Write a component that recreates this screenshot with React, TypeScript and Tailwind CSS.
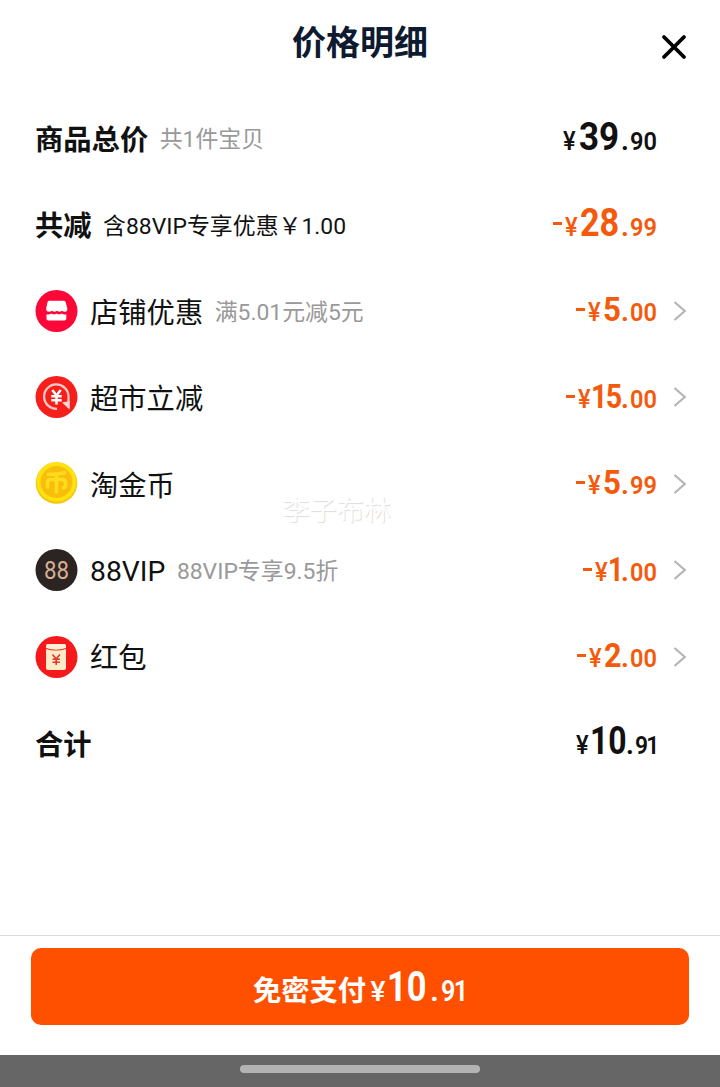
import type { ReactNode } from "react";
import clsx from "clsx";

type PriceProps = {
  minus?: boolean;
  whole: string;
  cents: string;
  // box and glyph squeeze of each part
  wholeBox: string;
  wholeText: string;
  centsBox?: string;
  centsText?: string;
};

function Price({ minus, whole, cents, wholeBox, wholeText, centsBox, centsText }: PriceProps) {
  return (
    <div
      className={clsx(
        "flex items-baseline whitespace-nowrap leading-none font-semibold pb-[3px]",
        minus ? "text-[#f45a0c]" : "text-[#111]"
      )}
    >
      {minus && <span className="w-[9px] h-[3px] mr-[3px] mb-[1px] bg-[#f45a0c] self-center relative top-[1px]" />}
      <span className="w-[15px] text-[25px] font-medium">
        <span className="inline-block origin-left scale-x-[0.95]">¥</span>
      </span>
      <span className={clsx("font-bold", wholeBox)}>
        <span className={clsx("inline-block origin-left", wholeText)}>{whole}</span>
      </span>
      <span className="w-[9px] text-[27px] font-bold">.</span>
      <span className={clsx("text-[26.5px]", centsBox || "w-[27px]")}>
        <span className={clsx("inline-block origin-left", centsText || "scale-x-[0.89]")}>
          {cents}
        </span>
      </span>
    </div>
  );
}

type RowProps = {
  icon?: ReactNode;
  label: string;
  latin?: boolean;
  note?: string;
  noteClass?: string;
  bold?: boolean;
  arrow?: boolean;
  children: ReactNode;
};

function Row({ icon, label, latin, note, noteClass, bold, arrow, children }: RowProps) {
  return (
    <div className="flex items-center h-[86.4px] pl-[35px] pr-[33px]">
      {icon && <span className="w-[43px] mr-[12px]">{icon}</span>}
      <span
        className={clsx(
          "text-[28.3px] leading-none text-[#111]",
          latin ? "pt-[3px]" : "pt-[6px]",
          bold && "font-bold"
        )}
      >
        {label}
      </span>
      {note && (
        <span className={clsx("ml-[11.5px] pt-[5px] text-[22.9px] leading-none", noteClass || "text-[#999]")}>
          {note}
        </span>
      )}
      <div className="ml-auto">{children}</div>
      <span className="w-[30px] flex justify-end">
        {arrow && (
          <svg width="14" height="22" viewBox="0 0 14 22" fill="none" stroke="#b5b5b5" strokeWidth="2.2">
            <path d="M1.5 2 11.8 11 1.5 20" />
          </svg>
        )}
      </span>
    </div>
  );
}

function ShopIcon() {
  return (
    <svg width="43" height="42" viewBox="0 0 43 42">
      <circle cx="21.5" cy="21" r="21" fill="#fb0738" />
      <path
        d="M14.3 10.8h14.4q1.6 0 2 1.4l1.6 6.2q.4 3-2.2 3.400-1.800.1-3.100-1-2.500 2-5 0-2.700 2-5 0-1.500 1.100-3.300 1-2.900-.6-2.500-3.400l1.300-6.200q.4-1.400 1.800-1.400z"
        fill="#fff"
      />
      <path
        d="M11.5 24.200q2.700.8 4.900-.8 2.700 1.700 5.100 0 2.700 1.700 5.100 0 2 1.500 4.700.8v4.500q0 1.800-1.800 1.800H13.300q-1.800 0-1.800-1.800z"
        fill="#fff"
      />
    </svg>
  );
}

function MarketIcon() {
  return (
    <svg width="43" height="42" viewBox="0 0 43 42">
      <circle cx="21.5" cy="21" r="21" fill="#f5201c" />
      <path
        d="M22 32.800A12.200 12.200 0 1 1 33.500 20.500V32"
        fill="none"
        stroke="#ffc9c5"
        strokeWidth="2.200"
      />
      <path d="M27 26.500 34.600 25v8.500z" fill="#ffd5d2" />
      <path
        d="m17.300 14 4.200 5.500 4.200-5.500M21.500 19.500v9M16.300 20.300h10.400M16.300 24.200h10.400"
        fill="none"
        stroke="#fff"
        strokeWidth="2.500"
      />
    </svg>
  );
}

function CoinIcon() {
  return (
    <svg width="43" height="42" viewBox="0 0 43 42" className="relative -top-px">
      <circle cx="21.5" cy="21" r="20.8" fill="#f3c80c" />
      <circle cx="21.5" cy="19.8" r="19.8" fill="#ffe211" />
      <circle cx="21.5" cy="20" r="16" fill="#f9bd0c" />
      <path
        d="M12 12.500Q22 12.500 31 10.500M21.500 13v18.500M12.500 26.500V21q0-3.500 3.500-3.500h11q3.500 0 3.500 3.500v2.500q0 2.500-3.500 2.500"
        fill="none"
        stroke="#ffdc1d"
        strokeWidth="3.600"
      />
    </svg>
  );
}

function VipIcon() {
  return (
    <svg width="43" height="42" viewBox="0 0 43 42">
      <circle cx="21.5" cy="21" r="21" fill="#2b2422" />
      <text
        transform="translate(21.5 30) scale(0.84 1)"
        textAnchor="middle"
        fontSize="26.5"
        fontWeight="400"
        fill="#d8ae92"
      >
        88
      </text>
    </svg>
  );
}

function RedPacketIcon() {
  return (
    <svg width="43" height="42" viewBox="0 0 43 42">
      <circle cx="21.5" cy="21" r="21" fill="#f5191b" />
      <path d="M11 9.500q0-1.500 1.500-1.500h17q1.500 0 1.500 1.500V12q-10 3.500-20 0z" fill="#fff0d5" />
      <path d="M11 13q10 3 20 0V32q0 2-2 2H13q-2 0-2-2z" fill="#fdebc8" />
      <path
        d="m17.500 18.500 3.700 4.500 3.700-4.500M21.200 23v6M17.500 23.200h7.400M17.500 26.200h7.400"
        fill="none"
        stroke="#e3352a"
        strokeWidth="1.600"
      />
    </svg>
  );
}

export default function App() {
  return (
    <div className="relative flex flex-col w-[720px] h-[1087px] bg-white overflow-hidden font-['Roboto','Noto_Sans_CJK_SC',sans-serif]">
      <header className="relative h-[95px] pt-[26px] text-center">
        <h1 className="text-[34px] leading-[34px] font-bold text-[#0e1a30]">价格明细</h1>
        <button className="absolute right-[33px] top-[34px]">
          <svg width="26" height="26" viewBox="0 0 26 26" stroke="#000" strokeWidth="3.8" strokeLinecap="round">
            <path d="M3 3 23 23M23 3 3 23" />
          </svg>
        </button>
      </header>

      <main className="flex-1">
        <Row label="商品总价" note="共1件宝贝" bold>
          <Price whole="39" cents="90" wholeBox="w-[43px] pl-[1px] text-[38px]" wholeText="scale-x-[0.92]" />
        </Row>
        <Row label="共减" note="含88VIP专享优惠￥1.00" noteClass="text-[#111]" bold>
          <Price minus whole="28" cents="99" wholeBox="w-[41px] text-[38px]" wholeText="scale-x-[0.9]" />
        </Row>
        <Row icon={<ShopIcon />} label="店铺优惠" note="满5.01元减5元" arrow>
          <Price minus whole="5" cents="00" wholeBox="w-[18px] text-[34px]" wholeText="scale-x-[0.92]" />
        </Row>
        <Row icon={<MarketIcon />} label="超市立减" arrow>
          <Price
            minus
            whole="15"
            cents="00"
            wholeBox="w-[30px] -ml-[2px] text-[34px]"
            wholeText="tracking-[-2px] scale-x-[0.84]"
          />
        </Row>
        <Row icon={<CoinIcon />} label="淘金币" arrow>
          <Price minus whole="5" cents="99" wholeBox="w-[18px] text-[34px]" wholeText="scale-x-[0.92]" />
        </Row>
        <Row icon={<VipIcon />} label="88VIP" latin note="88VIP专享9.5折" arrow>
          <Price
            minus
            whole="1"
            cents="00"
            wholeBox="w-[13px] -ml-[2px] text-[34px]"
            wholeText="tracking-[-4px] scale-x-[0.8]"
          />
        </Row>
        <Row icon={<RedPacketIcon />} label="红包" arrow>
          <Price minus whole="2" cents="00" wholeBox="w-[17px] text-[34px]" wholeText="scale-x-[0.9]" />
        </Row>
        <Row label="合计" bold>
          <Price
            whole="10"
            cents="91"
            wholeBox="w-[36px] -ml-[1px] text-[38px]"
            wholeText="scale-x-[0.84]"
            centsBox="w-[22px]"
            centsText="tracking-[-2px] scale-x-[0.86]"
          />
        </Row>
      </main>

      <footer className="h-[120px] border-t border-[#dcdcdc] pt-3 px-[31px] mb-8">
        <button className="flex w-full h-[77px] rounded-[10px] bg-[#ff5000] text-white items-baseline justify-center pt-[18px] leading-[40px] whitespace-nowrap">
          <span className="text-[28.3px] font-bold w-[120px] -ml-1">免密支付</span>
          <span className="w-[17px] text-[28px] font-medium">¥</span>
          <span className="w-[42px] text-[43px] font-bold">
            <span className="inline-block origin-left scale-x-[0.8]">10</span>
          </span>
          <span className="w-[12px] text-[29px] font-bold">.</span>
          <span className="w-[26px] text-[30px] font-semibold">
            <span className="inline-block origin-left tracking-[-2px] scale-x-[0.84]">91</span>
          </span>
        </button>
      </footer>

      <div className="absolute left-[282px] top-[497px] text-[27.2px] leading-[28px] text-white [text-shadow:1px_1px_1px_#ddd]">
        李子布林
      </div>

      <div className="absolute inset-x-0 bottom-0 h-8 bg-[#666] flex justify-center pt-[10px]">
        <span className="w-60 h-2 rounded-full bg-[#b3b3b3]" />
      </div>
    </div>
  );
}
